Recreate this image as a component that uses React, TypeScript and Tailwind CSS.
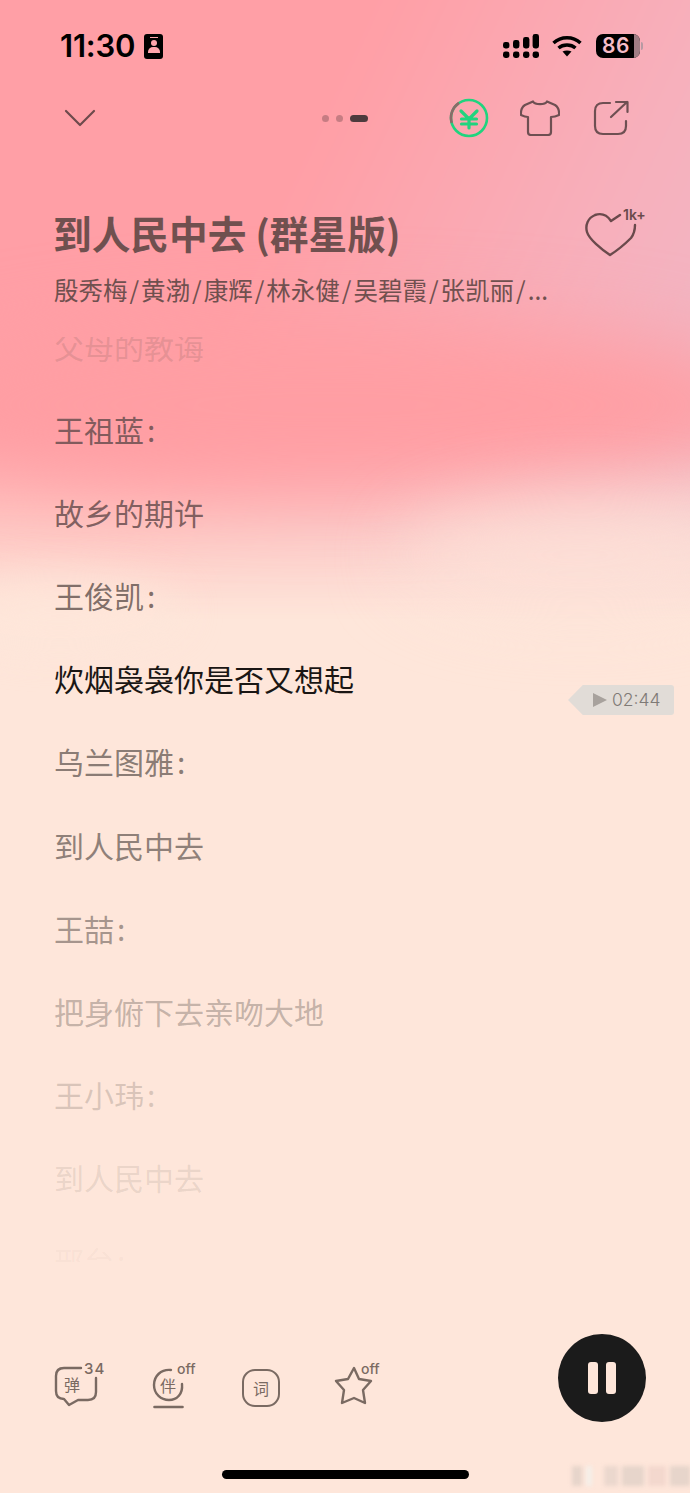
const FONT = "font-['Noto_Sans_CJK_SC','Noto_Sans',sans-serif]";

const lyrics = [
  { text: "父母的教诲", cls: "text-[#7a5a58]/20" },
  { text: "王祖蓝", colon: true, cls: "text-[#6c4f50]/85" },
  { text: "故乡的期许", cls: "text-[#6c4f50]/85" },
  { text: "王俊凯", colon: true, cls: "text-[#6b5a55]/85" },
  { text: "炊烟袅袅你是否又想起", cls: "text-[#1a1614]" },
  { text: "乌兰图雅", colon: true, cls: "text-[#6b5f59]/80" },
  { text: "到人民中去", cls: "text-[#6b5f59]/75" },
  { text: "王喆", colon: true, cls: "text-[#6b5f59]/60" },
  { text: "把身俯下去亲吻大地", cls: "text-[#6b5f59]/40" },
  { text: "王小玮", colon: true, cls: "text-[#6b5f59]/25" },
  { text: "到人民中去", cls: "text-[#6b5f59]/15" },
  { text: "邢台", colon: true, cls: "text-[#6b5f59]/5" },
];

const singers = ["殷秀梅", "黄渤", "康辉", "林永健", "吴碧霞", "张凯丽"];

function Chevron() {
  return (
    <svg width="32" height="20" viewBox="0 0 32 20" fill="none" stroke="#6e4a4c" strokeWidth="2.2" strokeLinecap="round" strokeLinejoin="round">
      <path d="M2 3 L16 17 L30 3" />
    </svg>
  );
}

function YenCircle() {
  return (
    <svg width="40" height="40" viewBox="0 0 40 40" fill="none" strokeWidth="2.6">
      <circle cx="20" cy="20" r="18" stroke="#20d47e" />
      <path d="M10 4.8 A18 18 0 0 0 2.7 24.8" stroke="#8a6a68" />
      <path d="M12 13 L20 21 L28 13 M20 21 V30 M12.5 21 H27.5 M12.5 26 H27.5" stroke="#20d47e" strokeWidth="3.2" strokeLinecap="round" />
    </svg>
  );
}

function Shirt() {
  return (
    <svg width="40" height="36" viewBox="0 0 40 36" fill="none" stroke="#6e4f52" strokeWidth="2.2" strokeLinejoin="round" strokeLinecap="round">
      <path d="M13 1.5 C15 5 25 5 27 1.5 L35 5 C38 7 39.5 10 39 15 C37 16 34 17 31 17 V32 C31 34 30 35 28 35 H11 C9 35 8 34 8 32 V17 C5 17 3 16 1 15 C0.5 10 2 7 5 5 Z" />
    </svg>
  );
}

function Share() {
  return (
    <svg width="36" height="36" viewBox="0 0 36 36" fill="none" stroke="#6e4f52" strokeWidth="2.2" strokeLinecap="round" strokeLinejoin="round">
      <path d="M17 3 H10 C5 3 2 6 2 11 V26 C2 31 5 34 10 34 H25 C30 34 33 31 33 26 V21" />
      <path d="M18 17 L34 2 M23 2 H34.5 V12" />
    </svg>
  );
}

function Heart() {
  return (
    <svg width="54" height="46" viewBox="0 0 54 46" fill="none" stroke="#6a4a4c" strokeWidth="2.4" strokeLinecap="round" strokeLinejoin="round">
      <path d="M36 4 L27 10 C23 4 17 2 11 4 C4 7 1 14 3 21 C5 28 17 38 26 44 C34 39 41 33 47 27 C50 23 51 20 51 14" />
    </svg>
  );
}

function CellBars() {
  return (
    <svg width="36" height="24" viewBox="0 0 36 24" fill="#000">
      <rect x="0" y="17.5" width="6.4" height="6.4" rx="2.4" />
      <rect x="10" y="17.5" width="6.4" height="6.4" rx="2.4" />
      <rect x="20" y="17.5" width="6.4" height="6.4" rx="2.4" />
      <rect x="29.6" y="17.5" width="6.4" height="6.4" rx="2.4" />
      <rect x="0" y="8" width="6.4" height="6.4" rx="2.4" />
      <rect x="10" y="6" width="6.4" height="8.4" rx="2.4" />
      <rect x="20" y="3" width="6.4" height="11.4" rx="2.4" />
      <rect x="29.6" y="0" width="6.4" height="14.4" rx="2.4" />
    </svg>
  );
}

function Wifi() {
  return (
    <svg width="30" height="22" viewBox="0 0 30 22" fill="none" stroke="#000" strokeWidth="3.4">
      <path d="M1.5 8 C9 1 21 1 28.5 8" />
      <path d="M6.5 13 C11 9 19 9 23.5 13" />
      <path d="M15 21.5 L10.5 16.5 C13 15 17 15 19.5 16.5 Z" fill="#000" stroke="none" />
    </svg>
  );
}

function Bottom() {
  const stroke = "#7a6a62";
  return (
    <div className="mt-[20px] flex items-start">
      <div className="relative h-[52px] w-[52px]">
        <svg width="52" height="52" viewBox="0 0 52 52" fill="none" stroke={stroke} strokeWidth="2.4" strokeLinecap="round" strokeLinejoin="round">
          <path d="M30 6 H13 C8 6 5 9 5 14 V29 C5 34 8 37 13 37 L18 43 L27 38 H37 C42 38 45 35 45 30 V16" />
        </svg>
        <span className="absolute left-[13px] top-[11px] text-[16px] leading-[22px] text-[#7a6a62]">弹</span>
        <span className="absolute left-[33px] top-[-1px] font-['Inter'] text-[15px] font-medium leading-[16px] tracking-[1px] text-[#7a6a62]">34</span>
      </div>
      <div className="relative ml-[46px] h-[52px] w-[52px]">
        <svg width="52" height="52" viewBox="0 0 52 52" fill="none" stroke={stroke} strokeWidth="2.4" strokeLinecap="round">
          <path d="M22 8 C12 7 5 14 5 23 C5 32 12 38 20 38 C28 38 34 32 33 22" />
          <path d="M5.5 45 H33.5" strokeWidth="2.6" />
        </svg>
        <span className="absolute left-[11px] top-[12px] text-[16px] leading-[22px] text-[#7a6a62]">伴</span>
        <span className="absolute left-[28px] top-[-1px] font-['Inter'] text-[14px] font-medium leading-[16px] text-[#7a6a62]">off</span>
      </div>
      <div className="relative ml-[38px] h-[52px] w-[52px]">
        <div className="absolute left-[3px] top-[7px] flex h-[38px] w-[38px] items-center justify-center rounded-[13px] border-[2.4px] border-[#7a6a62] text-[16px] text-[#7a6a62]">词</div>
      </div>
      <div className="relative ml-[41px] h-[52px] w-[52px]">
        <svg width="52" height="52" viewBox="0 0 52 52" fill="none" stroke={stroke} strokeWidth="2.4" strokeLinejoin="round">
          <path d="M22 6 L27 17 L39 19 L31 28 L33 41 L22 36 L10 41 L12 28 L4 19 L16 17 Z" />
        </svg>
        <span className="absolute left-[29px] top-[-1px] font-['Inter'] text-[14px] font-medium leading-[16px] text-[#7a6a62]">off</span>
      </div>
    </div>
  );
}

export default function App() {
  return (
    <div className={`${FONT} relative h-[1493px] w-[690px] overflow-hidden bg-[#fee6da]`}>
      {/* album colour wash */}
      <div className="absolute inset-x-[-80px] top-[-80px] h-[720px] bg-[linear-gradient(115deg,#ff9fa6_0%,#ff9fa6_42%,#f7b0bc_70%,#ebbccb_100%)] blur-[22px] [mask-image:linear-gradient(to_bottom,black_0,black_490px,transparent_700px)]" />
      <div className="absolute left-[-120px] top-[320px] h-[170px] w-[900px] rounded-[50%] bg-[#ff9ea3] blur-[40px]" />
      <div className="absolute left-[400px] top-[500px] h-[110px] w-[360px] rounded-[50%] bg-[#fee3d8]/70 blur-[36px]" />
      <div className="absolute left-[-60px] top-[575px] h-[70px] w-[240px] rounded-[50%] bg-[#fee6da]/80 blur-[20px]" />

      <div className="relative flex h-full flex-col">
        <div className="flex h-[88px] items-start justify-between pl-[60px] pr-[47px] pt-[30px]">
          <div className="flex items-center gap-[9px]">
            <span className="font-['Inter'] text-[31px] font-semibold leading-[32px] tracking-[-0.2px] text-black">11:30</span>
            <div className="flex h-[25px] w-[19px] flex-col items-center rounded-[3px] bg-black pt-[3px]">
              <div className="h-[1.5px] w-[8px] bg-[#ffa5ac]" />
              <div className="mt-[2px] h-[6px] w-[6px] rounded-full bg-[#ffa5ac]" />
              <div className="mt-[1px] h-[6px] w-[12px] rounded-t-[5px] bg-[#ffa5ac]" />
            </div>
          </div>
          <div className="mt-[4px] flex items-center">
            <CellBars />
            <div className="ml-[13px]"><Wifi /></div>
            <div className="relative ml-[14px] flex h-[24px] w-[44px] items-center overflow-hidden rounded-[7px] bg-black pl-[6px]">
              <span className="font-['Inter'] text-[21px] font-semibold leading-[24px] tracking-[0.5px] text-[#f6bcc7]">86</span>
              <div className="absolute bottom-0 right-0 top-0 w-[6px] bg-[#a07d84]" />
            </div>
            <div className="ml-[1px] h-[8px] w-[2px] rounded-r-full bg-[#b79aa3]" />
          </div>
        </div>

        <div className="flex h-[60px] items-center pl-[64px] pr-[60px]">
          <Chevron />
          <div className="ml-[226px] flex items-center gap-[7px]">
            <div className="h-[7px] w-[7px] rounded-full bg-[#70494e]/40" />
            <div className="h-[7px] w-[7px] rounded-full bg-[#70494e]/40" />
            <div className="h-[7px] w-[18px] rounded-full bg-[#4d3b3e]" />
          </div>
          <div className="ml-[81px] flex items-center">
            <YenCircle />
            <div className="ml-[31px]"><Shirt /></div>
            <div className="ml-[33px]"><Share /></div>
          </div>
        </div>

        <div className="mt-[54px] flex items-start justify-between pl-[53px] pr-[40px]">
          <div>
            <h1 className="whitespace-nowrap text-[38.7px] font-bold leading-[60px] text-[#70504f]">到人民中去 (群星版)</h1>
            <p className="mt-[8px] flex whitespace-nowrap pl-[1px] text-[24.5px] leading-[40px] text-[#70504f]">
              {singers.map((s) => (
                <span key={s}>{s}<span className="mx-[2px]">/</span></span>
              ))}
              <span>...</span>
            </p>
          </div>
          <div className="relative mt-[9px] h-[46px] w-[66px]">
            <Heart />
            <span className="absolute left-[39px] top-[-4px] font-['Inter'] text-[14px] font-semibold leading-[16px] text-[#6a4a4c]">1k+</span>
          </div>
        </div>

        <div className="mt-[27px] h-[925px] overflow-hidden pl-[54px]">
          <div className="-mt-[11px] flex flex-col gap-[43.1px]">
            {lyrics.map((l, i) => (
              <p key={i} className={`whitespace-nowrap text-[30px] leading-[40px] ${l.cls}`}>
                {l.text}
                {l.colon && <span className="ml-[3px]">:</span>}
              </p>
            ))}
          </div>
        </div>

        <div className="mt-[72px] flex items-center justify-between pl-[51px] pr-[44px]">
          <Bottom />
          <div className="flex h-[88px] w-[88px] items-center justify-center gap-[8px] rounded-full bg-[#1b1b1b]">
            <div className="h-[32px] w-[10px] rounded-[3px] bg-[#fee6da]" />
            <div className="h-[32px] w-[10px] rounded-[3px] bg-[#fee6da]" />
          </div>
        </div>
      </div>

      {/* seek marker */}
      <div className="absolute left-[568px] top-[685px] flex h-[30px] w-[106px] items-center rounded-r-[3px] bg-[#e1dcd7] pl-[25px] [clip-path:polygon(14%_0,100%_0,100%_100%,14%_100%,0_50%)]">
        <svg width="14" height="14" viewBox="0 0 14 14" fill="#a8a29d"><path d="M0 0 L14 7 L0 14 Z" /></svg>
        <span className="ml-[5px] font-['Inter'] text-[17.5px] font-light leading-[30px] text-[#7f7a76]">02:44</span>
      </div>

      {/* home bar */}
      <div className="absolute left-[222px] top-[1470px] h-[9px] w-[247px] rounded-full bg-black" />

      {/* blurred watermark */}
      <div className="absolute left-[572px] top-[1466px] flex h-[20px] gap-[4px] blur-[2px]">
        <div className="w-[10px] bg-[#cfc4bb]/50" />
        <div className="w-[6px] bg-[#f4efe9]" />
        <div className="ml-[8px] w-[14px] bg-[#cfc4bb]/40" />
        <div className="w-[22px] bg-[#cfc4bb]/50" />
        <div className="w-[18px] bg-[#e4c4bb]/40" />
        <div className="w-[20px] bg-[#cfc4bb]/50" />
      </div>
    </div>
  );
}
